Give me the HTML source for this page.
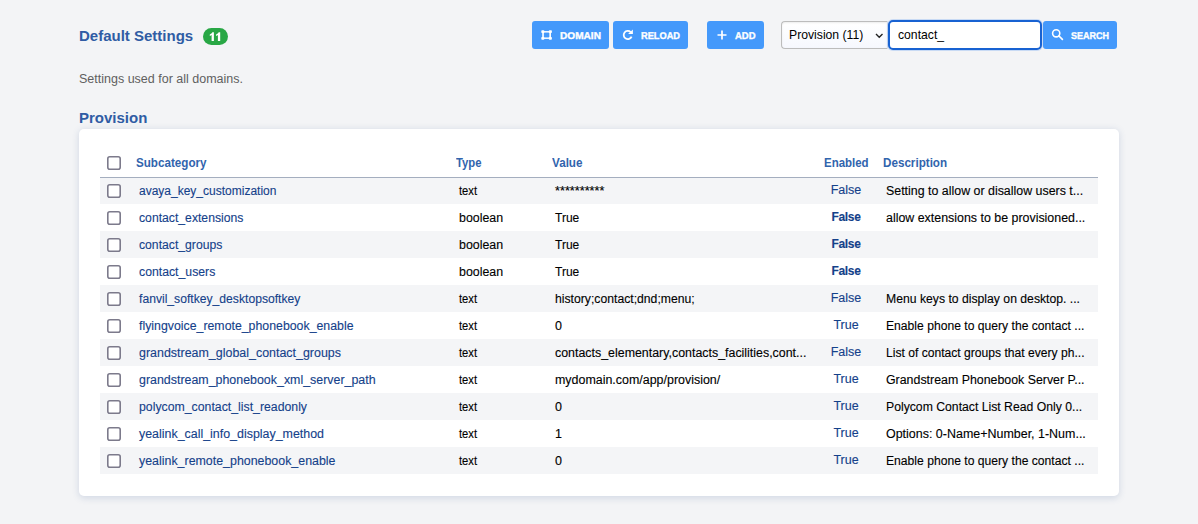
<!DOCTYPE html>
<html><head><meta charset="utf-8">
<style>
*{box-sizing:border-box}
html,body{margin:0;padding:0}
body{width:1198px;height:524px;overflow:hidden;background:#f3f4f6;font-family:"Liberation Sans",sans-serif;font-size:12px;color:#000;position:relative}
.abs{position:absolute}
.title{left:79px;top:27px;font-size:15px;font-weight:bold;color:#2f5ca4;line-height:18px;white-space:nowrap}
.badge{left:203px;top:28px;width:25px;height:17px;border-radius:9px;background:#28a745;color:#fff;font-weight:bold;font-size:12px;line-height:18px;text-align:center;text-rendering:geometricPrecision}
.btn{top:21px;height:28px;background:#4499fb;border-radius:3px;color:#fff;font-weight:bold;font-size:9.8px;line-height:28px;white-space:nowrap}
.bt{text-rendering:geometricPrecision;top:1.8px;-webkit-text-stroke:0.35px #fff;display:inline-block;transform-origin:left center}
.desc{left:79px;top:72px;font-size:12.5px;color:#5f5f5f;line-height:15px}
.h2{left:79px;top:109px;font-size:15px;font-weight:bold;color:#2f5ca4;line-height:18px}
.card{left:79px;top:129px;width:1040px;height:366.5px;background:#fff;border-radius:5px;box-shadow:0 1.5px 7px rgba(60,90,150,0.19)}
table{position:absolute;left:100px;top:149px;width:998px;border-collapse:collapse;table-layout:fixed}
th{height:28px;text-align:left;font-size:12px;color:#3164ad;font-weight:bold;border-bottom:1px solid #a4aebf;padding:0;white-space:nowrap}
td{height:27px;padding:0;white-space:nowrap;overflow:hidden;text-overflow:ellipsis;font-size:12.5px;color:#000;-webkit-text-stroke:0.12px #000}
tr.o td{background:#f4f5f7}
td a{color:#14418a;text-decoration:none;-webkit-text-stroke:0.12px #14418a}
.cb{display:block;margin-left:7px;position:relative;top:0.5px}
.en{color:#14418a;text-align:center;font-size:12.5px;-webkit-text-stroke:0.12px #14418a}
.b{font-weight:bold;font-size:12px;letter-spacing:-0.3px}
.c1{padding-left:2.9px}.c2,.c3{padding-left:3px}.c5{padding-left:5.7px}
.s{display:inline-block;transform-origin:left center;white-space:nowrap}
.en span{position:relative;top:-1px}
</style></head><body>
<div class="abs title">Default Settings</div>
<div class="abs badge"><svg class="abs" style="left:0;top:0" width="25" height="17" viewBox="0 0 25 17"><path d="M10.9 4.3H9.3C9.0 5.3 7.9 6.1 6.800000000000001 6.4V8C7.6000000000000005 7.8 8.2 7.4 8.600000000000001 7V12.9H10.9ZM17.2 4.3H15.6C15.299999999999999 5.3 14.2 6.1 13.1 6.4V8C13.899999999999999 7.8 14.5 7.4 14.899999999999999 7V12.9H17.2Z" fill="#fff"/></svg></div>

<div class="abs btn" style="left:532px;width:77px">
<svg class="abs" style="left:9px;top:9px" width="11.2" height="10" viewBox="0 0 11 11" preserveAspectRatio="none"><rect x="2" y="2" width="7" height="7" fill="none" stroke="#fff" stroke-width="1.6"/><rect x="0.3" y="0.3" width="3" height="3" rx="0.8" fill="#fff"/><rect x="7.7" y="0.3" width="3" height="3" rx="0.8" fill="#fff"/><rect x="0.3" y="7.7" width="3" height="3" rx="0.8" fill="#fff"/><rect x="7.7" y="7.7" width="3" height="3" rx="0.8" fill="#fff"/></svg>
<span class="abs bt" id="t1" style="left:28px;transform:scale(1.030,1)">DOMAIN</span></div>
<div class="abs btn" style="left:613px;width:75px">
<svg class="abs" style="left:9px;top:8px" width="12" height="12" viewBox="0 0 12 12"><path d="M9.6 7.6 A4.1 4.1 0 1 1 8.7 3.1" fill="none" stroke="#fff" stroke-width="1.8"/><path d="M6.1 5.1 L10.9 0.4 L10.9 5.1 Z" fill="#fff"/></svg>
<span class="abs bt" id="t2" style="left:28px;transform:scale(0.943,1)">RELOAD</span></div>
<div class="abs btn" style="left:707px;width:57px">
<svg class="abs" style="left:10px;top:9px" width="10" height="10" viewBox="0 0 10 10"><path d="M5 0.5V9.5M0.5 5H9.5" stroke="#fff" stroke-width="1.7" fill="none"/></svg>
<span class="abs bt" id="t3" style="left:28px;transform:scale(0.969,1)">ADD</span></div>
<div class="abs" style="left:781px;top:21px;width:107px;height:28px;background:linear-gradient(#fff,#f6f8fe);border:1px solid #bcbcbc;border-right-color:#dfe3ee;border-radius:4px 0 0 4px;box-shadow:inset 0 1px 2px rgba(0,0,0,0.08);font-size:13px;line-height:25px;padding-left:6.5px"><span id="t5" style="display:inline-block;transform-origin:left center;transform:scaleX(0.938)">Provision (11)</span>
<svg class="abs" style="left:93px;top:11px" width="9" height="6" viewBox="0 0 9 6"><path d="M1 1L4.25 4.2L7.5 1" fill="none" stroke="#222" stroke-width="1.4"/></svg></div>
<div class="abs" style="left:888px;top:20px;width:154px;height:30px;background:#fff;border:2px solid #1862d2;border-radius:5px;box-shadow:0 0 0 1px rgba(120,170,240,0.35);font-size:13px;line-height:25px;padding-left:7.6px"><span id="t6" style="display:inline-block;transform-origin:left center;transform:scaleX(0.937)">contact_</span></div>
<div class="abs btn" style="left:1043px;width:74px">
<svg class="abs" style="left:8px;top:7.3px" width="13" height="13" viewBox="0 0 13 13"><circle cx="5.2" cy="5.3" r="3.6" fill="none" stroke="#fff" stroke-width="1.6"/><path d="M8 8L11.4 11.4" stroke="#fff" stroke-width="1.7" stroke-linecap="round"/></svg>
<span class="abs bt" id="t4" style="left:27.7px;transform:scale(0.919,1)">SEARCH</span></div>

<div class="abs desc">Settings used for all domains.</div>
<div class="abs h2">Provision</div>
<div class="abs card"></div>
<table>
<colgroup><col style="width:36px"><col style="width:320px"><col style="width:96px"><col style="width:260px"><col style="width:68px"><col style="width:218px"></colgroup>
<tr><th><svg class="cb" width="14" height="14" viewBox="0 0 14 14"><rect x="0.8" y="0.8" width="12.4" height="12.4" rx="2" fill="#fff" stroke="#7c7a8b" stroke-width="1.6"/></svg></th><th><span class="s" id="h1" style="transform:scaleX(0.9699)">Subcategory</span></th><th><span class="s" id="h2" style="transform:scaleX(0.9401)">Type</span></th><th><span class="s" id="h3" style="transform:scaleX(0.9726)">Value</span></th><th style="padding-left:12px"><span class="s" id="h4" style="transform:scaleX(0.9553)">Enabled</span></th><th style="padding-left:3px"><span class="s" id="h5" style="transform:scaleX(0.9710)">Description</span></th></tr>
<tr class="o"><td><svg class="cb" width="14" height="14" viewBox="0 0 14 14"><rect x="0.8" y="0.8" width="12.4" height="12.4" rx="2" fill="#fff" stroke="#7c7a8b" stroke-width="1.6"/></svg></td><td class="c1"><a class="s" id="a1" style="transform:scaleX(0.9600)">avaya_key_customization</a></td><td class="c2"><span class="s" id="t1x" style="transform:scaleX(0.8980)">text</span></td><td class="c3"><span class="s" id="v1" style="transform:scaleX(1.0153)">**********</span></td><td class="en"><span>False</span></td><td class="c5"><span class="s" id="d1" style="transform:scaleX(0.9920)">Setting to allow or disallow users t...</span></td></tr>
<tr><td><svg class="cb" width="14" height="14" viewBox="0 0 14 14"><rect x="0.8" y="0.8" width="12.4" height="12.4" rx="2" fill="#fff" stroke="#7c7a8b" stroke-width="1.6"/></svg></td><td class="c1"><a class="s" id="a2" style="transform:scaleX(0.9756)">contact_extensions</a></td><td class="c2"><span class="s" id="t2x" style="transform:scaleX(0.9910)">boolean</span></td><td class="c3"><span class="s" id="v2" style="transform:scaleX(0.9624)">True</span></td><td class="en b"><span>False</span></td><td class="c5"><span class="s" id="d2" style="transform:scaleX(0.9925)">allow extensions to be provisioned...</span></td></tr>
<tr class="o"><td><svg class="cb" width="14" height="14" viewBox="0 0 14 14"><rect x="0.8" y="0.8" width="12.4" height="12.4" rx="2" fill="#fff" stroke="#7c7a8b" stroke-width="1.6"/></svg></td><td class="c1"><a class="s" id="a3" style="transform:scaleX(0.9746)">contact_groups</a></td><td class="c2"><span class="s" id="t3x" style="transform:scaleX(0.9910)">boolean</span></td><td class="c3"><span class="s" id="v3" style="transform:scaleX(0.9624)">True</span></td><td class="en b"><span>False</span></td><td class="c5"><span class="s" id="d3"></span></td></tr>
<tr><td><svg class="cb" width="14" height="14" viewBox="0 0 14 14"><rect x="0.8" y="0.8" width="12.4" height="12.4" rx="2" fill="#fff" stroke="#7c7a8b" stroke-width="1.6"/></svg></td><td class="c1"><a class="s" id="a4" style="transform:scaleX(0.9805)">contact_users</a></td><td class="c2"><span class="s" id="t4x" style="transform:scaleX(0.9910)">boolean</span></td><td class="c3"><span class="s" id="v4" style="transform:scaleX(0.9624)">True</span></td><td class="en b"><span>False</span></td><td class="c5"><span class="s" id="d4"></span></td></tr>
<tr class="o"><td><svg class="cb" width="14" height="14" viewBox="0 0 14 14"><rect x="0.8" y="0.8" width="12.4" height="12.4" rx="2" fill="#fff" stroke="#7c7a8b" stroke-width="1.6"/></svg></td><td class="c1"><a class="s" id="a5" style="transform:scaleX(0.9719)">fanvil_softkey_desktopsoftkey</a></td><td class="c2"><span class="s" id="t5x" style="transform:scaleX(0.8980)">text</span></td><td class="c3"><span class="s" id="v5" style="transform:scaleX(0.9760)">history;contact;dnd;menu;</span></td><td class="en"><span>False</span></td><td class="c5"><span class="s" id="d5" style="transform:scaleX(0.9763)">Menu keys to display on desktop. ...</span></td></tr>
<tr><td><svg class="cb" width="14" height="14" viewBox="0 0 14 14"><rect x="0.8" y="0.8" width="12.4" height="12.4" rx="2" fill="#fff" stroke="#7c7a8b" stroke-width="1.6"/></svg></td><td class="c1"><a class="s" id="a6" style="transform:scaleX(0.9861)">flyingvoice_remote_phonebook_enable</a></td><td class="c2"><span class="s" id="t6x" style="transform:scaleX(0.8980)">text</span></td><td class="c3"><span class="s" id="v6">0</span></td><td class="en"><span>True</span></td><td class="c5"><span class="s" id="d6" style="transform:scaleX(0.9711)">Enable phone to query the contact ...</span></td></tr>
<tr class="o"><td><svg class="cb" width="14" height="14" viewBox="0 0 14 14"><rect x="0.8" y="0.8" width="12.4" height="12.4" rx="2" fill="#fff" stroke="#7c7a8b" stroke-width="1.6"/></svg></td><td class="c1"><a class="s" id="a7" style="transform:scaleX(0.9955)">grandstream_global_contact_groups</a></td><td class="c2"><span class="s" id="t7x" style="transform:scaleX(0.8980)">text</span></td><td class="c3"><span class="s" id="v7" style="transform:scaleX(0.9922)">contacts_elementary,contacts_facilities,cont...</span></td><td class="en"><span>False</span></td><td class="c5"><span class="s" id="d7" style="transform:scaleX(0.9684)">List of contact groups that every ph...</span></td></tr>
<tr><td><svg class="cb" width="14" height="14" viewBox="0 0 14 14"><rect x="0.8" y="0.8" width="12.4" height="12.4" rx="2" fill="#fff" stroke="#7c7a8b" stroke-width="1.6"/></svg></td><td class="c1"><a class="s" id="a8" style="transform:scaleX(0.9927)">grandstream_phonebook_xml_server_path</a></td><td class="c2"><span class="s" id="t8x" style="transform:scaleX(0.8980)">text</span></td><td class="c3"><span class="s" id="v8" style="transform:scaleX(0.9949)">mydomain.com/app/provision/</span></td><td class="en"><span>True</span></td><td class="c5"><span class="s" id="d8" style="transform:scaleX(0.9897)">Grandstream Phonebook Server P...</span></td></tr>
<tr class="o"><td><svg class="cb" width="14" height="14" viewBox="0 0 14 14"><rect x="0.8" y="0.8" width="12.4" height="12.4" rx="2" fill="#fff" stroke="#7c7a8b" stroke-width="1.6"/></svg></td><td class="c1"><a class="s" id="a9" style="transform:scaleX(0.9829)">polycom_contact_list_readonly</a></td><td class="c2"><span class="s" id="t9x" style="transform:scaleX(0.8980)">text</span></td><td class="c3"><span class="s" id="v9">0</span></td><td class="en"><span>True</span></td><td class="c5"><span class="s" id="d9" style="transform:scaleX(0.9772)">Polycom Contact List Read Only 0...</span></td></tr>
<tr><td><svg class="cb" width="14" height="14" viewBox="0 0 14 14"><rect x="0.8" y="0.8" width="12.4" height="12.4" rx="2" fill="#fff" stroke="#7c7a8b" stroke-width="1.6"/></svg></td><td class="c1"><a class="s" id="a10" style="transform:scaleX(0.9934)">yealink_call_info_display_method</a></td><td class="c2"><span class="s" id="t10x" style="transform:scaleX(0.8980)">text</span></td><td class="c3"><span class="s" id="v10">1</span></td><td class="en"><span>True</span></td><td class="c5"><span class="s" id="d10" style="transform:scaleX(0.9970)">Options: 0-Name+Number, 1-Num...</span></td></tr>
<tr class="o"><td><svg class="cb" width="14" height="14" viewBox="0 0 14 14"><rect x="0.8" y="0.8" width="12.4" height="12.4" rx="2" fill="#fff" stroke="#7c7a8b" stroke-width="1.6"/></svg></td><td class="c1"><a class="s" id="a11" style="transform:scaleX(0.9921)">yealink_remote_phonebook_enable</a></td><td class="c2"><span class="s" id="t11x" style="transform:scaleX(0.8980)">text</span></td><td class="c3"><span class="s" id="v11">0</span></td><td class="en"><span>True</span></td><td class="c5"><span class="s" id="d11" style="transform:scaleX(0.9711)">Enable phone to query the contact ...</span></td></tr>
</table>
</body></html>
